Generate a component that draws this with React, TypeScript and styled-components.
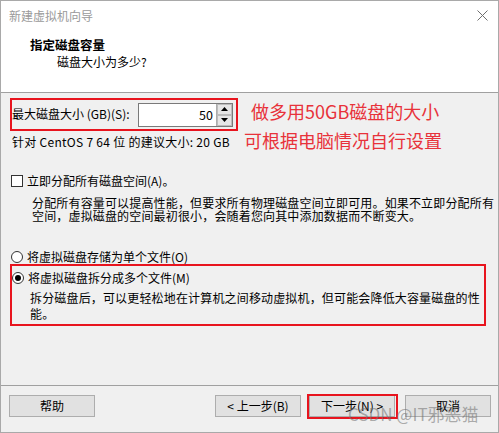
import React from "react";
import styled, { createGlobalStyle } from "styled-components";

const Global = createGlobalStyle`
  html, body { margin: 0; padding: 0; background: #ffffff; }
  body { font-family: "Noto Sans CJK SC", "Noto Sans", sans-serif; }
`;

const Window = styled.div`
  position: relative;
  box-sizing: border-box;
  width: 499px;
  height: 433px;
  border: 1px solid #a9a9a9;
  display: flex;
  flex-direction: column;
  font-family: "Noto Sans CJK SC", "Noto Sans", sans-serif;
  font-size: 12px;
  color: #000;
  overflow: hidden;
`;

const TitleBar = styled.div`
  height: 29px;
  background: #fff;
  display: flex;
  align-items: center;
  justify-content: space-between;
  padding: 0 10px 0 8px;
`;

const Title = styled.span`
  color: #9a9a9a;
  font-size: 12px;
  line-height: 29px;
`;

const Header = styled.div`
  height: 57px;
  background: #fff;
  border-bottom: 1px solid #a0a0a0;
  padding: 7px 0 0 29px;
  box-sizing: content-box;
`;

const Heading = styled.div`
  font-weight: bold;
  font-size: 12.5px;
  line-height: 16px;
`;

const SubHeading = styled.div`
  line-height: 16px;
  margin: 1px 0 0 27px;
`;

const Body = styled.div`
  position: relative;
  height: 304px;
  background: #f0f0f0;
  display: flex;
  flex-direction: column;
  align-items: flex-start;
`;

const SizeBox = styled.div`
  box-sizing: border-box;
  margin: 5px 0 0 9px;
  width: 228px;
  height: 33px;
  border: 2px solid #e8141e;
  display: flex;
  align-items: center;
  justify-content: space-between;
  padding: 0 3px 0 0;
`;

const FieldLabel = styled.span`
  line-height: 16px;
`;

const Spinner = styled.div`
  box-sizing: border-box;
  width: 95px;
  height: 24px;
  border: 1px solid #7a7a7a;
  background: #fff;
  display: flex;
  margin-top: 1px;
`;

const SpinValue = styled.div`
  flex: 1;
  text-align: right;
  padding-right: 3px;
  line-height: 22px;
  font-size: 12.5px;
`;

const SpinButtons = styled.div`
  width: 15px;
  display: flex;
  flex-direction: column;
  border-left: 1px solid #adadad;
`;

const SpinButton = styled.div`
  flex: 1;
  background: #e6e6e6;
  border: 1px solid #bcbcbc;
  display: flex;
  align-items: center;
  justify-content: center;
`;

const Hint = styled.div`
  margin: 3px 0 0 11px;
  line-height: 16px;
  letter-spacing: 0.28px;
`;

const Option = styled.div<{ $lh?: number; $mt?: number; $ml?: number }>`
  display: flex;
  align-items: center;
  gap: 4px;
  line-height: ${(p) => p.$lh ?? 16}px;
  height: ${(p) => p.$lh ?? 16}px;
  margin-top: ${(p) => p.$mt ?? 0}px;
  margin-left: ${(p) => p.$ml ?? 10}px;
`;

const CheckBox = styled.span`
  box-sizing: border-box;
  width: 12px;
  height: 12px;
  border: 1px solid #333;
  background: #fff;
`;

const Radio = styled.span<{ $checked?: boolean }>`
  box-sizing: border-box;
  width: 12px;
  height: 12px;
  border-radius: 50%;
  border: 1px solid #333;
  background: #fff;
  display: flex;
  align-items: center;
  justify-content: center;
  &::after {
    content: "";
    width: 6px;
    height: 6px;
    border-radius: 50%;
    background: ${(p) => (p.$checked ? "#000" : "transparent")};
  }
`;

const Desc = styled.div<{ $lh: number; $mt: number; $ml: number }>`
  margin: ${(p) => p.$mt}px 0 0 ${(p) => p.$ml}px;
  line-height: ${(p) => p.$lh}px;
  white-space: nowrap;
  letter-spacing: 0.16px;
`;

const Highlight = styled.div`
  box-sizing: border-box;
  margin-left: 9px;
  width: 476px;
  height: 62px;
  border: 2px solid #e8141e;
  padding-top: 4px;
  display: flex;
  flex-direction: column;
  align-items: flex-start;
`;

const Note = styled.div<{ $left: number; $top: number }>`
  position: absolute;
  left: ${(p) => p.$left}px;
  top: ${(p) => p.$top}px;
  color: #e8323a;
  font-size: 18px;
  line-height: 22px;
  white-space: nowrap;
`;

const Footer = styled.div`
  height: 39px;
  border-top: 1px solid #a0a0a0;
  background: #f0f0f0;
  display: flex;
  align-items: flex-start;
  padding: 9px 7px 0 8px;
  box-sizing: content-box;
`;

const Button = styled.div<{ $push?: boolean }>`
  box-sizing: border-box;
  width: 86px;
  height: 22px;
  border: 1px solid #adadad;
  background: #e1e1e1;
  text-align: center;
  line-height: 20px;
  white-space: nowrap;
  margin-right: ${(p) => (p.$push ? "auto" : "0")};
`;

const NextWrap = styled.div`
  position: relative;
  margin: 0 10px 0 8px;
  &::after {
    content: "";
    position: absolute;
    left: -2px;
    top: -1px;
    right: -3px;
    bottom: -2px;
    border: 2px solid #e8141e;
  }
`;

const Watermark = styled.div`
  position: absolute;
  left: 347px;
  top: 402px;
  font-size: 17px;
  line-height: 22px;
  color: rgba(110, 110, 110, 0.55);
  white-space: nowrap;
  font-family: "Noto Sans CJK SC", "Noto Sans", sans-serif;
  pointer-events: none;
`;

const Close = () => (
  <svg width="11" height="11" viewBox="0 0 11 11">
    <path d="M0.5 0.5 L10.5 10.5 M10.5 0.5 L0.5 10.5" stroke="#6f6f6f" strokeWidth="1" fill="none" />
  </svg>
);

const Tri = ({ up }: { up?: boolean }) => (
  <svg width="7" height="4" viewBox="0 0 7 4">
    <path d={up ? "M0 4 L3.5 0 L7 4 Z" : "M0 0 L3.5 4 L7 0 Z"} fill="#000" />
  </svg>
);

export default function App() {
  return (
    <>
      <Global />
      <Window>
        <TitleBar>
          <Title>新建虚拟机向导</Title>
          <Close />
        </TitleBar>
        <Header>
          <Heading>指定磁盘容量</Heading>
          <SubHeading>磁盘大小为多少?</SubHeading>
        </Header>
        <Body>
          <SizeBox>
            <FieldLabel>最大磁盘大小 (GB)(S):</FieldLabel>
            <Spinner>
              <SpinValue>50</SpinValue>
              <SpinButtons>
                <SpinButton>
                  <Tri up />
                </SpinButton>
                <SpinButton>
                  <Tri />
                </SpinButton>
              </SpinButtons>
            </Spinner>
          </SizeBox>
          <Hint>针对 CentOS 7 64 位 的建议大小: 20 GB</Hint>
          <Option $mt={23}>
            <CheckBox />
            <span>立即分配所有磁盘空间(A)。</span>
          </Option>
          <Desc $lh={13} $mt={7} $ml={31}>
            分配所有容量可以提高性能，但要求所有物理磁盘空间立即可用。如果不立即分配所有
            <br />
            空间，虚拟磁盘的空间最初很小，会随着您向其中添加数据而不断变大。
          </Desc>
          <Option $mt={28} $lh={14}>
            <Radio />
            <span>将虚拟磁盘存储为单个文件(O)</span>
          </Option>
          <Highlight>
            <Option $ml={0}>
              <Radio $checked />
              <span>将虚拟磁盘拆分成多个文件(M)</span>
            </Option>
            <Desc $lh={16} $mt={4} $ml={18}>
              拆分磁盘后，可以更轻松地在计算机之间移动虚拟机，但可能会降低大容量磁盘的性
              <br />
              能。
            </Desc>
          </Highlight>
          <Note $left={250} $top={7}>做多用50GB磁盘的大小</Note>
          <Note $left={243} $top={36}>可根据电脑情况自行设置</Note>
        </Body>
        <Footer>
          <Button $push>帮助</Button>
          <Button>&lt; 上一步(B)</Button>
          <NextWrap>
            <Button>下一步(N) &gt;</Button>
          </NextWrap>
          <Button>取消</Button>
        </Footer>
        <Watermark>CSDN @IT邪恶猫</Watermark>
      </Window>
    </>
  );
}
